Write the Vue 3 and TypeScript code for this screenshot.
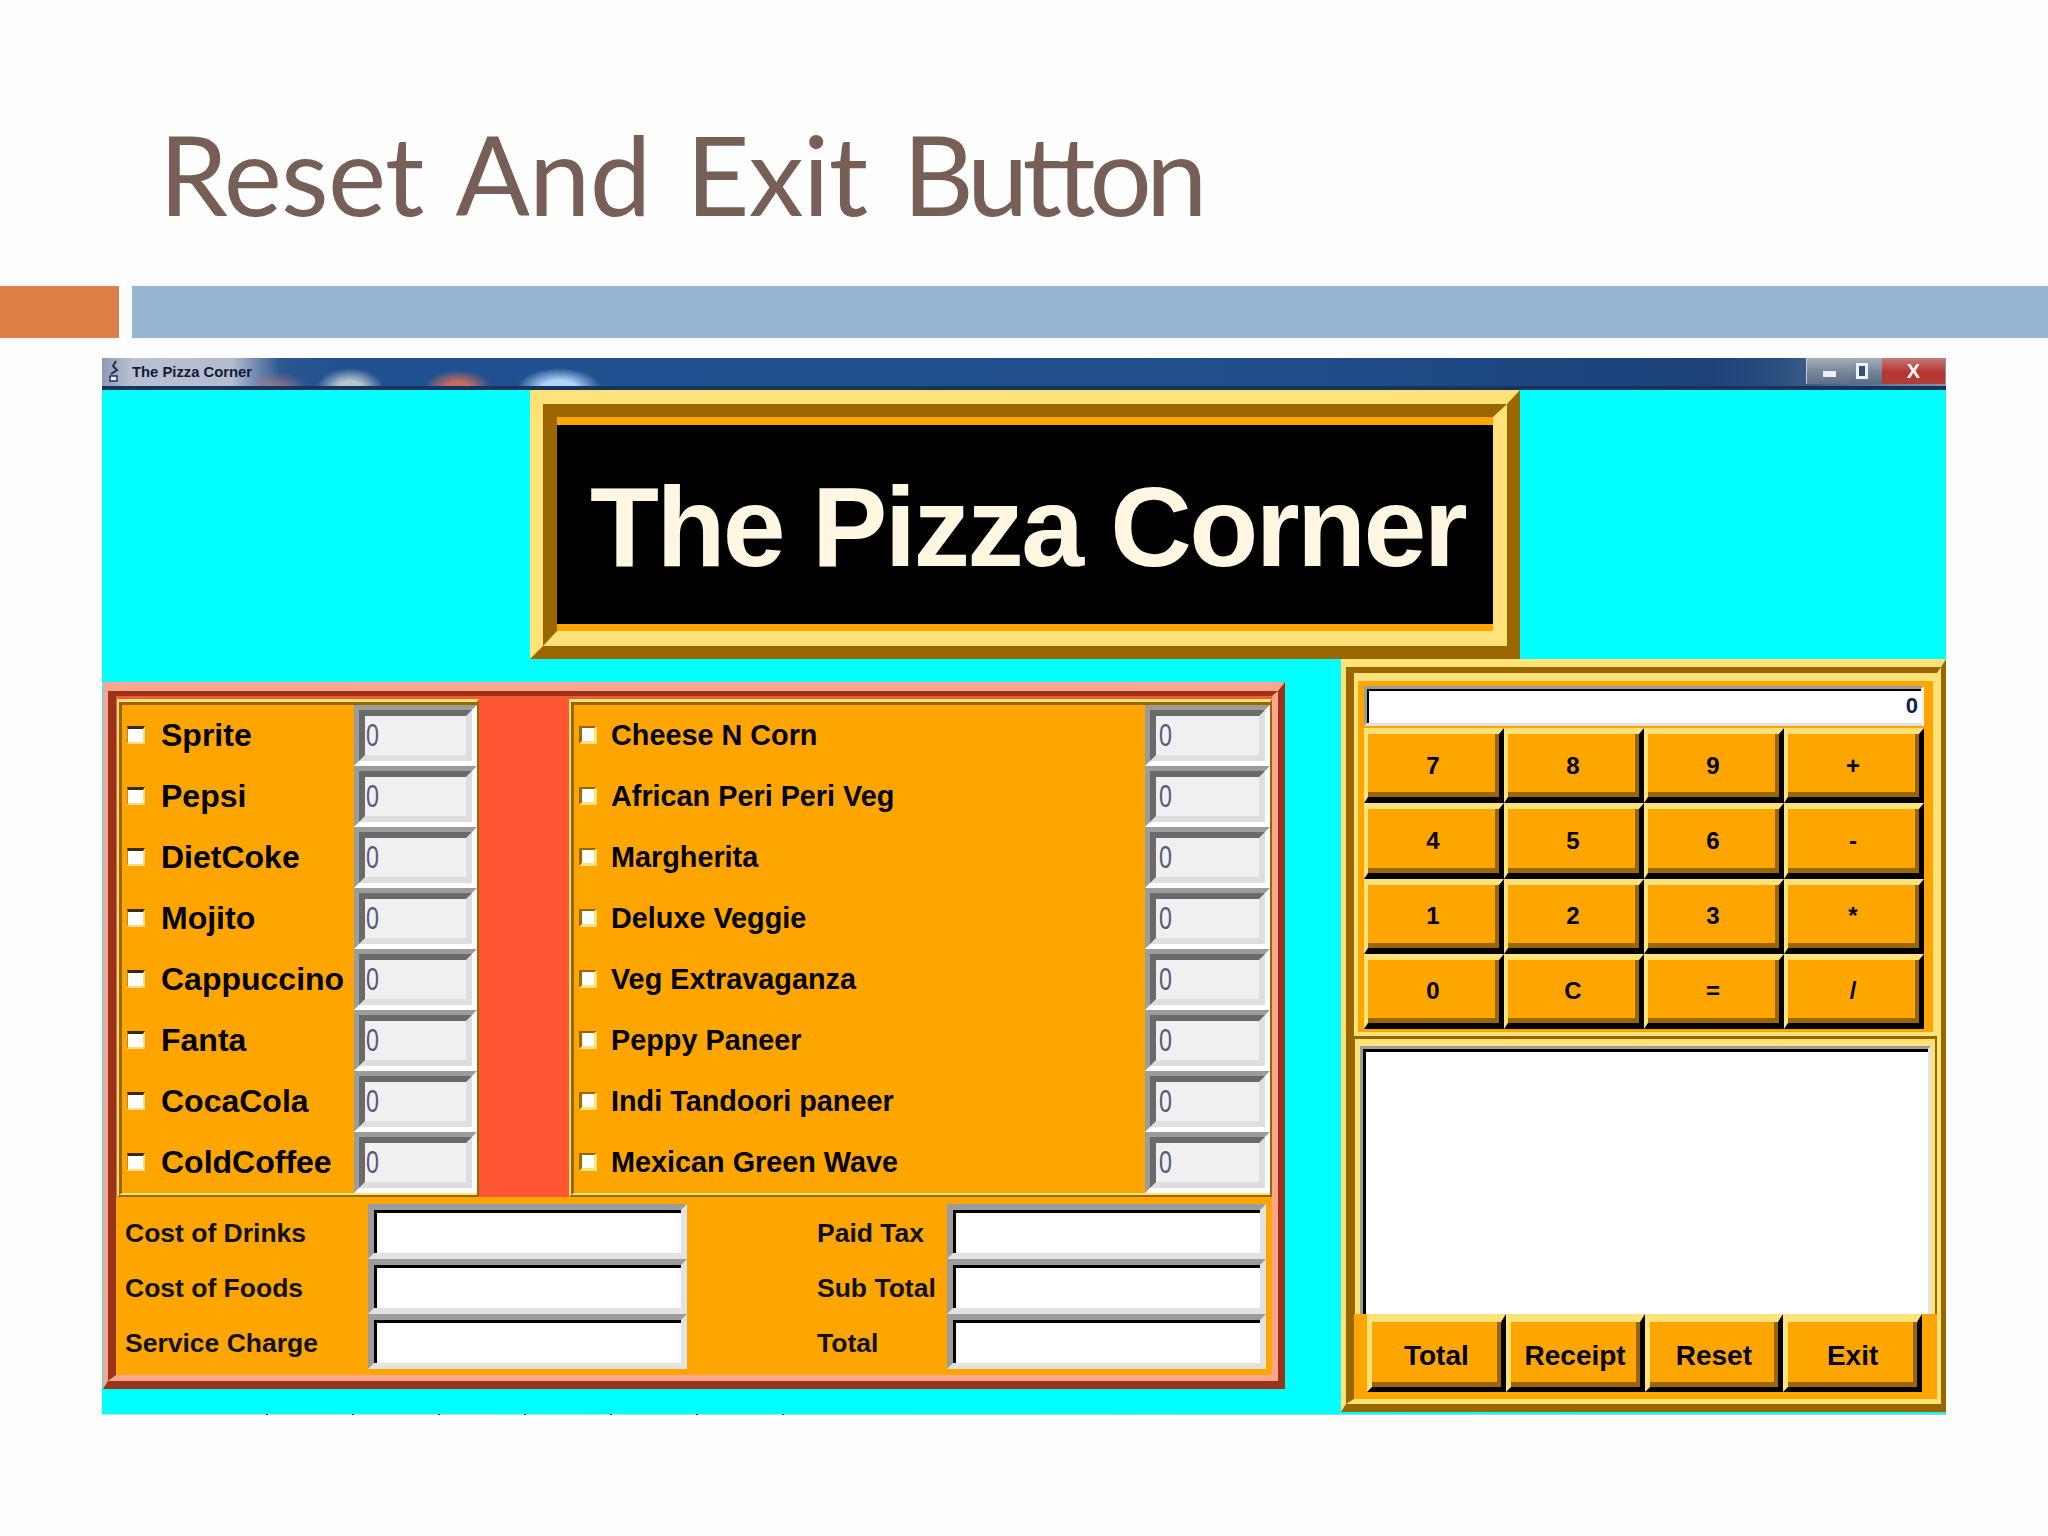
<script setup lang="ts">
const drinks: string[] = ['Sprite', 'Pepsi', 'DietCoke', 'Mojito', 'Cappuccino', 'Fanta', 'CocaCola', 'ColdCoffee']
const foods: string[] = ['Cheese N Corn', 'African Peri Peri Veg', 'Margherita', 'Deluxe Veggie', 'Veg Extravaganza', 'Peppy Paneer', 'Indi Tandoori paneer', 'Mexican Green Wave']
const totals: string[] = ['Cost of Drinks', 'Paid Tax', 'Cost of Foods', 'Sub Total', 'Service Charge', 'Total']
const keys: string[] = ['7', '8', '9', '+', '4', '5', '6', '-', '1', '2', '3', '*', '0', 'C', '=', '/']
const actions: string[] = ['Total', 'Receipt', 'Reset', 'Exit']
</script>

<template>
  <div class="slide">
    <h1 class="title">Reset And Exit <span class="title-tight">Button</span></h1>
    <div class="bars">
      <div class="bar-orange"></div>
      <div class="bar-blue"></div>
    </div>
    <div class="window">
      <div class="titlebar">
        <svg class="app-icon" width="12" height="24" viewBox="0 0 12 24">
          <path d="M8 1 L5 6 L9 10 L3 14" fill="none" stroke="#20305a" stroke-width="2" />
          <path d="M2 16 H9 V21 H2 Z" fill="#f2f4f8" stroke="#20305a" stroke-width="1.5" />
        </svg>
        <span class="win-title">The Pizza Corner</span>
        <div class="win-controls">
          <span class="ctl ctl-min"><i class="min-glyph"></i></span>
          <span class="ctl ctl-max"><i class="max-glyph"></i></span>
          <span class="ctl ctl-close">X</span>
        </div>
      </div>

      <div class="content">
        <div class="banner-outer">
          <div class="banner-inner">
            <div class="banner-text">The Pizza Corner</div>
          </div>
        </div>

        <div class="lower">
          <div class="order-outer">
            <div class="order-inner">
              <div class="menus">
                <div class="group group-drinks">
                  <div class="group-in">
                    <div v-for="d in drinks" :key="d" class="item">
                      <span class="check check-dark"></span>
                      <span class="item-label drink-label">{{ d }}</span>
                      <span class="qty"><span class="qty-in"><span class="zero">0</span></span></span>
                    </div>
                  </div>
                </div>
                <div class="group group-foods">
                  <div class="group-in">
                    <div v-for="f in foods" :key="f" class="item">
                      <span class="check check-brown"></span>
                      <span class="item-label food-label">{{ f }}</span>
                      <span class="qty qty-wide"><span class="qty-in"><span class="zero">0</span></span></span>
                    </div>
                  </div>
                </div>
              </div>
              <div class="totals">
                <template v-for="(t, i) in totals" :key="t">
                  <span class="total-label" :class="{ 'right-label': i % 2 === 1 }">{{ t }}</span>
                  <span class="field"><span class="field-in"></span></span>
                </template>
              </div>
            </div>
          </div>

          <div class="calc-outer">
            <div class="calc-inner">
              <div class="keypad">
                <div class="readout"><span class="readout-in">0</span></div>
                <div class="keys">
                  <button v-for="k in keys" :key="k" class="btn key"><span class="btn-in">{{ k }}</span></button>
                </div>
              </div>
              <div class="log">
                <div class="log-box"><div class="log-in"></div></div>
              </div>
              <div class="actions">
                <button v-for="a in actions" :key="a" class="btn action"><span class="btn-in">{{ a }}</span></button>
              </div>
            </div>
          </div>
        </div>
      </div>
      <div class="edge"></div>
    </div>
  </div>
</template>

<style>
html, body { margin: 0; background: #fff; }
</style>

<style scoped>
.slide {
  width: 2048px;
  height: 1536px;
  background: #fefefe;
  overflow: hidden;
  font-family: "Liberation Sans", Arial, sans-serif;
}
.title {
  margin: 0;
  height: 286px;
  box-sizing: border-box;
  padding: 113px 0 0 159px;
  font-family: Lato, "Open Sans", sans-serif;
  font-weight: 400;
  font-size: 110px;
  letter-spacing: -0.7px;
  word-spacing: 8px;
  line-height: 120px;
  color: #775f55;
  white-space: nowrap;
}
.title-tight { letter-spacing: -5.8px; }
.bars { display: flex; height: 52px; gap: 13px; }
.bar-orange { width: 119px; background: #dd8047; }
.bar-blue { flex: 1; background: #94b6d2; }

.window {
  width: 1844px;
  margin: 20px 0 0 102px;
  display: flex;
  flex-direction: column;
}
.titlebar {
  height: 32px;
  box-sizing: border-box;
  display: flex;
  align-items: center;
  padding: 0 1px 0 6px;
  border-bottom: 4px solid #17345f;
  background:
    radial-gradient(ellipse 34px 20px at 248px 30px, rgba(190, 205, 210, 0.95) 35%, rgba(190, 205, 210, 0) 100%),
    radial-gradient(ellipse 34px 18px at 356px 30px, rgba(205, 110, 95, 0.95) 35%, rgba(205, 110, 95, 0) 100%),
    radial-gradient(ellipse 42px 20px at 457px 30px, rgba(175, 210, 245, 1) 40%, rgba(175, 210, 245, 0) 100%),
    radial-gradient(ellipse 30px 16px at 175px 30px, rgba(205, 135, 125, 0.7), rgba(205, 135, 125, 0) 100%),
    linear-gradient(90deg, #8d9ab8 0, #b9c0d2 30px, #b4bccf 130px, #2c5891 178px, #1f5090 240px, #214f8c 60%, #1c4279 87%, #2a4f80 91%, #8595aa 100%);
}
.app-icon { flex: none; }
.win-title {
  margin-left: 12px;
  font-size: 14.8px;
  font-weight: 700;
  line-height: 20px;
  color: #151a38;
  white-space: nowrap;
}
.win-controls { margin-left: auto; display: flex; height: 26px; margin-top: -2px; }
.ctl { display: flex; align-items: center; box-sizing: border-box; height: 26px; }
.ctl-min {
  width: 44px;
  padding-left: 16px;
  border-left: 1px solid #c4ccd6;
  background: linear-gradient(#a5aebb, #76859a 55%, #5f7088);
}
.ctl-max {
  width: 32px;
  padding-left: 6px;
  background: linear-gradient(#a5aebb, #72839a 55%, #5a6c85);
}
.ctl-close {
  width: 63px;
  justify-content: center;
  background: linear-gradient(#c77a75, #b5352f 55%, #b03d38);
  color: #fff;
  font-size: 20px;
  font-weight: 700;
}
.min-glyph { display: block; width: 13px; height: 6px; margin-top: 6px; background: #eef0f4; }
.max-glyph { display: block; width: 6px; height: 10px; border: 3px solid #eef0f4; background: #33507a; }

.content { background: #00ffff; display: flex; flex-direction: column; padding-bottom: 2px; }

.banner-outer {
  width: 990px;
  height: 269px;
  margin-left: 428px;
  box-sizing: border-box;
  border-style: solid;
  border-width: 14px 13px 13px 13px;
  border-color: #ffe27a #996600 #996600 #ffe27a;
}
.banner-inner {
  height: 100%;
  box-sizing: border-box;
  border-style: solid;
  border-width: 13px 14px 15px 14px;
  border-color: #996600 #ffe27a #ffe27a #996600;
}
.banner-text {
  height: 100%;
  box-sizing: border-box;
  background: #000;
  border-top: 8px solid #ffa500;
  border-bottom: 7px solid #ffa500;
  padding: 10px 0 0 33px;
  color: #fff7e2;
  font-size: 113px;
  letter-spacing: -2.6px;
  font-weight: 700;
  line-height: 184px;
  white-space: nowrap;
}

.lower { display: flex; height: 753px; }

.order-outer {
  width: 1182px;
  height: 707px;
  margin: 23px 0 0 1px;
  box-sizing: border-box;
  border-style: solid;
  border-width: 9px 7px 8px 5px;
  border-color: #ffa58f #993319 #993319 #ffa58f;
}
.order-inner {
  height: 100%;
  box-sizing: border-box;
  border-style: solid;
  border-width: 5px 6px 6px 8px;
  border-color: #993319 #ffa58f #ffa58f #993319;
  display: flex;
  flex-direction: column;
}
.menus {
  height: 501px;
  box-sizing: border-box;
  padding: 3px 0 0 1px;
  background: #ff5733;
  display: flex;
  justify-content: space-between;
}
.group {
  box-sizing: border-box;
  height: 498px;
  border-style: solid;
  border-width: 3px 2px 2px 2px;
  border-color: #ffe27a #996600 #996600 #ffe27a;
}
.group-drinks { width: 362px; }
.group-foods { width: 703px; }
.group-in {
  height: 100%;
  box-sizing: border-box;
  background: #ffa500;
  border-style: solid;
  border-width: 3px 0 2px 3px;
  border-color: #996600 #ffe27a #ffe27a #996600;
  display: flex;
  flex-direction: column;
}
.item { height: 61px; flex: none; display: flex; align-items: center; padding-left: 5px; }
.check {
  flex: none;
  width: 18px;
  height: 18px;
  box-sizing: border-box;
  background: #fff;
  margin-top: -1px;
}
.check-dark {
  border-top: 3px solid #3a2a10;
  border-left: 1px solid #b88a20;
  border-bottom: 2px solid #ffdc80;
  border-right: 2px solid #ffdc80;
}
.check-brown {
  border-top: 2px solid #996600;
  border-left: 3px solid #996600;
  border-bottom: 3px solid #ffe27a;
  border-right: 3px solid #ffe27a;
}
.item-label { color: #000; font-weight: 700; white-space: nowrap; }
.drink-label { margin-left: 16px; font-size: 32px; }
.food-label { margin-left: 14px; font-size: 28.8px; }
.qty {
  flex: none;
  margin-left: auto;
  width: 123px;
  height: 61px;
  box-sizing: border-box;
  border-style: solid;
  border-width: 5px;
  border-color: #9c9c9c #ffffff #ffffff #9c9c9c;
}
.qty-wide { width: 125px; }
.qty-wide .qty-in { padding-left: 3px; }
.qty-in {
  display: flex;
  align-items: center;
  height: 100%;
  box-sizing: border-box;
  padding-left: 1px;
  background: #f0f0f0;
  border-style: solid;
  border-width: 6px;
  border-color: #6a6a6a #dedede #dedede #6a6a6a;
}
.zero {
  display: inline-block;
  font-size: 31px;
  line-height: 1;
  color: #5a5a78;
  transform: scaleX(0.75);
  transform-origin: left center;
}

.totals {
  flex: 1;
  background: #ffa500;
  box-sizing: border-box;
  padding: 7px 0 0 9px;
  display: grid;
  grid-template-columns: 243px 319px 130px 130px 319px;
  grid-auto-rows: 55px;
}
.total-label {
  align-self: center;
  padding-top: 4px;
  font-size: 26.5px;
  font-weight: 700;
  color: #111;
  white-space: nowrap;
}
.right-label { grid-column: 4; }
.field {
  box-sizing: border-box;
  border-style: solid;
  border-width: 6px;
  border-color: #9c9c9c #e2e2e2 #e2e2e2 #9c9c9c;
}
.field-in {
  display: block;
  height: 100%;
  box-sizing: border-box;
  background: #fff;
  border-top: 3px solid #000;
  border-left: 3px solid #000;
}

.calc-outer {
  width: 605px;
  height: 753px;
  margin-left: 56px;
  box-sizing: border-box;
  border-style: solid;
  border-width: 8px 5px 8px 5px;
  border-color: #ffe27a #996600 #996600 #ffe27a;
}
.calc-inner {
  height: 100%;
  box-sizing: border-box;
  border-style: solid;
  border-width: 6px 4px 5px 8px;
  border-color: #996600 #ffe27a #ffe27a #996600;
  display: flex;
  flex-direction: column;
  background: #ffa500;
}
.keypad {
  height: 363px;
  box-sizing: border-box;
  background: #ffa500;
  border-style: solid;
  border-color: #ffe27a;
  border-width: 8px 4px 4px 4px;
  padding: 5px 9px 3px 6px;
  display: flex;
  flex-direction: column;
}
.readout {
  height: 40px;
  flex: none;
  box-sizing: border-box;
  border-style: solid;
  border-width: 3px;
  border-color: #9c9c9c #f2f2f2 #e2e2e2 #9c9c9c;
  margin-bottom: 2px;
}
.readout-in {
  display: block;
  height: 100%;
  box-sizing: border-box;
  background: #fff;
  border-top: 2px solid #000;
  border-left: 2px solid #000;
  text-align: right;
  padding-right: 3px;
  font-size: 22px;
  font-weight: 700;
  line-height: 30px;
  color: #10204a;
}
.keys {
  flex: 1;
  display: grid;
  grid-template-columns: repeat(4, 1fr);
  grid-template-rows: repeat(4, 1fr);
}
.btn {
  display: block;
  margin: 0;
  padding: 0;
  box-sizing: border-box;
  border-style: solid;
  border-width: 6px 5px 6px 4px;
  border-color: #ffe27a #000 #000 #ffe27a;
  background: #ffa500;
  font-family: "Liberation Sans", Arial, sans-serif;
  font-weight: 700;
  color: #000;
}
.btn-in {
  display: flex;
  align-items: center;
  justify-content: center;
  height: 100%;
  box-sizing: border-box;
  padding: 5px 0 0 3px;
  border-style: solid;
  border-width: 0 4px 5px 0;
  border-color: #ffa500 #996600 #996600 #ffa500;
}
.key { font-size: 24px; }
.log {
  height: 278px;
  flex: none;
  box-sizing: border-box;
  border-top: 3px solid #996600;
  border-left: 1px solid #996600;
  border-right: 2px solid #996600;
  background: #ffe27a;
  padding: 7px 4px 0 5px;
}
.log-box {
  height: 100%;
  box-sizing: border-box;
  border-style: solid;
  border-width: 3px 3px 0 3px;
  border-color: #9c9c9c #dfe4ee #fff #9c9c9c;
}
.log-in {
  height: 100%;
  box-sizing: border-box;
  background: #fff;
  border-top: 3px solid #000;
  border-left: 3px solid #000;
}
.actions {
  flex: 1;
  box-sizing: border-box;
  padding: 0 15px 7px 13px;
  display: grid;
  grid-template-columns: repeat(4, 1fr);
  background: #ffa500;
}
.action {
  font-size: 28px;
  border-width: 8px 5px 5px 5px;
}
.action .btn-in { padding: 7px 0 0 4px; }
.edge {
  height: 1px;
  background:
    repeating-linear-gradient(90deg, transparent 0, transparent 84px, #445 84px, #445 86px) 80px 0 / 620px 100% no-repeat,
    linear-gradient(90deg, #bfe4ee, #9fd8e6 60%, #b6c8dc);
}
</style>
